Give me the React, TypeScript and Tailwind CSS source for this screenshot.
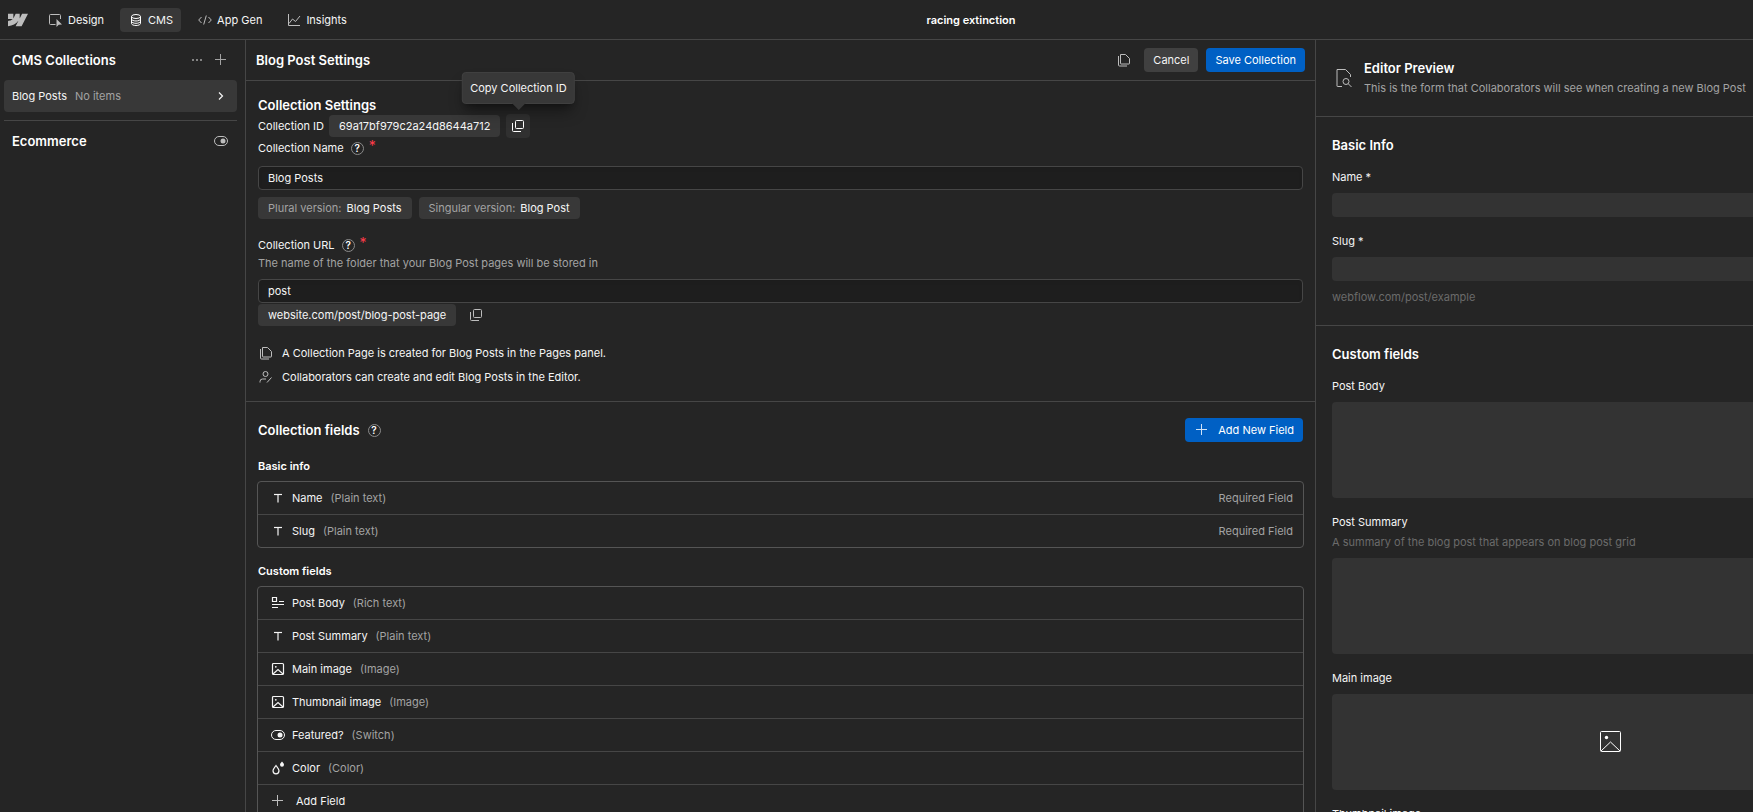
import { useState } from "react";
import type { ReactNode } from "react";

interface IconProps {
  className?: string;
  size?: number;
  children: ReactNode;
}

interface Field {
  icon: ReactNode;
  name: string;
  type: string;
  required?: boolean;
}

// All icons are stroked on a 16px grid
function Icon({ className = "", size = 16, children }: IconProps) {
  return (
    <svg
      width={size}
      height={size}
      viewBox="0 0 16 16"
      fill="none"
      stroke="currentColor"
      className={`shrink-0 ${className}`}
      aria-hidden="true"
    >
      {children}
    </svg>
  );
}

function WebflowLogo() {
  return (
    <svg
      width="20"
      height="20"
      viewBox="0 0 24 24"
      fill="currentColor"
      className="text-[#bdbdbd]"
      aria-hidden="true"
    >
      <path d="m24 4.515-7.658 14.97H9.149l3.205-6.204h-.144C9.566 16.713 5.621 18.973 0 19.485v-6.118s3.596-.213 5.71-2.435H0V4.515h6.417v5.278l.144-.001 2.622-5.277h4.854v5.244h.144l2.72-5.244H24Z" />
    </svg>
  );
}

const DesignIcon = () => (
  <Icon>
    <path d="M7.500 12.500h-5a1 1 0 0 1-1-1v-8a1 1 0 0 1 1-1h9a1 1 0 0 1 1 1V7" />
    <path d="M8.500 7v8l2.200-2.300 3.300-.2z" fill="currentColor" stroke="none" />
  </Icon>
);

const DatabaseIcon = () => (
  <Icon>
    <ellipse cx="8" cy="4.500" rx="4.500" ry="2" />
    <path d="M3.500 4.500v7c0 1.100 2 2 4.500 2s4.500-.9 4.500-2v-7" />
    <path d="M3.500 7c0 1.100 2 2 4.500 2s4.500-.9 4.500-2M3.500 9.300c0 1.100 2 2 4.500 2s4.500-.9 4.500-2" />
  </Icon>
);

const CodeIcon = () => (
  <Icon>
    <path d="M4.500 5 1.700 8l2.800 3M11.500 5l2.800 3-2.800 3M9.300 3.500l-2.600 9" />
  </Icon>
);

const ChartIcon = () => (
  <Icon>
    <path d="M2.500 2v11.500H14M3 11.500 6.500 7l3 2.500L14 4" />
  </Icon>
);

const PlusIcon = ({ className = "" }: { className?: string }) => (
  <Icon className={className}>
    <path d="M7.500 2v11M2 7.500h11" />
  </Icon>
);

const DotsIcon = () => (
  <Icon>
    <path d="M3 8h2M7 8h2M11 8h2" strokeWidth="1.500" />
  </Icon>
);

const ChevronIcon = () => (
  <Icon>
    <path d="m6 4.500 3.500 3.500L6 11.500" strokeWidth="1.200" />
  </Icon>
);

const SwitchIcon = () => (
  <Icon>
    <rect x="1.500" y="3.500" width="13" height="9" rx="4.500" />
    <circle cx="10" cy="8" r="2.500" fill="currentColor" stroke="none" />
  </Icon>
);

const CopyIcon = () => (
  <Icon>
    <rect x="5.500" y="2.500" width="8" height="8" rx="1" />
    <path d="M2.500 5v7.500a1 1 0 0 0 1 1H11" />
  </Icon>
);

const PagesIcon = () => (
  <Icon>
    <path d="M4.500 2.500h5l4 4v5a.5.5 0 0 1-.5.500H5a.5.5 0 0 1-.5-.5z" />
    <path d="M2.500 4v9a1 1 0 0 0 1 1H11" />
  </Icon>
);

const CollaboratorIcon = () => (
  <Icon>
    <circle cx="7.500" cy="5" r="2.500" />
    <path d="M2 13.500v-1a2.500 2.500 0 0 1 2.500-2.500H8M9 13.500l4.500-5" />
  </Icon>
);

const PlainTextIcon = () => (
  <Icon>
    <path d="M4 4.500h8" strokeWidth="1.200" />
    <path d="M8 4.500v8" strokeWidth="1.200" />
  </Icon>
);

const RichTextIcon = () => (
  <Icon>
    <path d="M2.500 2.500h4v4h-4zM9 6.500h5M2 9.500h12M2 12.500h6" strokeWidth="1.200" />
  </Icon>
);

const ImageIcon = () => (
  <Icon>
    <rect x="2.500" y="2.500" width="11" height="11" rx="1" strokeWidth="1.200" />
    <path d="m3 13 5-4.500 5 4.500" strokeWidth="1.200" />
    <circle cx="5.800" cy="5.800" r=".9" fill="currentColor" stroke="none" />
  </Icon>
);

const ColorIcon = () => (
  <Icon>
    <path
      d="M6 5.500C4.500 7.500 3 9 3 10.800a3 3 0 0 0 6 0C9 9 7.500 7.500 6 5.500z"
      strokeWidth="1.200"
    />
    <path
      d="M12 1.500c-.9 1.200-2 2.100-2 3.300a2 2 0 0 0 4 0c0-1.200-1.100-2.100-2-3.300z"
      fill="currentColor"
      stroke="none"
    />
  </Icon>
);

const navItems = [
  { label: "Design", icon: <DesignIcon />, active: false },
  { label: "CMS", icon: <DatabaseIcon />, active: true },
  { label: "App Gen", icon: <CodeIcon />, active: false },
  { label: "Insights", icon: <ChartIcon />, active: false },
];

const basicFields: Field[] = [
  { icon: <PlainTextIcon />, name: "Name", type: "Plain text", required: true },
  { icon: <PlainTextIcon />, name: "Slug", type: "Plain text", required: true },
];

const customFields: Field[] = [
  { icon: <RichTextIcon />, name: "Post Body", type: "Rich text" },
  { icon: <PlainTextIcon />, name: "Post Summary", type: "Plain text" },
  { icon: <ImageIcon />, name: "Main image", type: "Image" },
  { icon: <ImageIcon />, name: "Thumbnail image", type: "Image" },
  { icon: <SwitchIcon />, name: "Featured?", type: "Switch" },
  { icon: <ColorIcon />, name: "Color", type: "Color" },
];

function HelpButton({ label }: { label: string }) {
  return (
    <button
      type="button"
      aria-label={label}
      className="flex h-[13px] w-[13px] items-center justify-center rounded-full border border-[#8a8a8a] text-[10px] leading-none font-semibold text-white"
    >
      ?
    </button>
  );
}

function Chip({ children }: { children: ReactNode }) {
  return (
    <span className="flex h-[22px] items-center gap-[5px] rounded bg-[#383838] px-[10px] text-[#f5f5f5]">
      {children}
    </span>
  );
}

function FieldRow({ field }: { field: Field }) {
  return (
    <li className="flex h-[33px] items-center border-b border-[#464646] pr-[10px] pl-3 last:h-8 last:border-b-0">
      {field.icon}
      <span className="ml-[6px]">{field.name}</span>
      <span className="ml-2 text-[#a3a3a3]">({field.type})</span>
      {field.required && (
        <span className="ml-auto text-[#a3a3a3]">Required Field</span>
      )}
    </li>
  );
}

function PreviewImage({ label }: { label: string }) {
  return (
    <div className="mb-4">
      <p className="mb-2 leading-4">{label}</p>
      <div className="flex h-24 items-center justify-center rounded bg-[#333333]">
        <svg
          width="24"
          height="24"
          viewBox="0 0 24 24"
          fill="none"
          stroke="white"
          aria-hidden="true"
        >
          <rect x="1.500" y="1.500" width="20" height="20" rx="1" />
          <path d="m2 21 9.500-9 9.500 9" />
          <circle cx="7.500" cy="7.500" r="1.700" fill="white" stroke="none" />
        </svg>
      </div>
    </div>
  );
}

export default function App() {
  const [name, setName] = useState("Blog Posts");
  const [slug, setSlug] = useState("post");

  return (
    <div className="flex h-screen flex-col overflow-hidden bg-[#252525] font-['Inter',sans-serif] text-[11px] leading-4 text-[#f5f5f5]">
      {/* Top bar */}
      <header className="flex h-10 shrink-0 items-center border-b border-[#464646] pl-2">
        <a href="#" aria-label="Webflow">
          <WebflowLogo />
        </a>
        <nav className="ml-3 flex gap-2">
          {navItems.map((item) => (
            <a
              key={item.label}
              href="#"
              className={`flex h-6 items-center gap-1 rounded px-2 ${
                item.active ? "bg-[#383838]" : ""
              }`}
            >
              <span className={item.active ? "text-white" : "text-[#bdbdbd]"}>
                {item.icon}
              </span>
              {item.label}
            </a>
          ))}
        </nav>
        <h1 className="flex-1 pr-[166px] text-center font-semibold text-white">
          racing extinction
        </h1>
      </header>

      <div className="flex min-h-0 flex-1">
        {/* Collections sidebar */}
        <aside className="w-[246px] shrink-0 border-r border-[#464646] pr-2 pl-1">
          <div className="flex h-10 items-center pr-2 pl-2 text-[#a3a3a3]">
            <h2 className="flex-1 text-[13px] font-semibold text-white">
              CMS Collections
            </h2>
            <button type="button" aria-label="More options" className="mr-2">
              <DotsIcon />
            </button>
            <button type="button" aria-label="New collection">
              <PlusIcon />
            </button>
          </div>
          <a
            href="#"
            className="flex h-8 items-center rounded bg-[#383838] pr-2 pl-2"
          >
            <span>Blog Posts</span>
            <span className="ml-2 flex-1 text-[#a3a3a3]">No items</span>
            <ChevronIcon />
          </a>
          <div className="mt-2 flex h-10 items-center border-t border-[#464646] px-2">
            <h2 className="flex-1 text-[13px] font-semibold text-white">
              Ecommerce
            </h2>
            <button
              type="button"
              aria-label="Toggle Ecommerce"
              className="text-[#bdbdbd]"
            >
              <SwitchIcon />
            </button>
          </div>
        </aside>

        {/* Collection settings */}
        <main className="min-w-0 flex-1 overflow-hidden">
          <div className="flex h-[41px] items-center border-b border-[#464646] pr-[10px] pl-[10px]">
            <h2 className="flex-1 text-[13px] font-semibold text-white">
              Blog Post Settings
            </h2>
            <button
              type="button"
              aria-label="Duplicate collection"
              className="mr-3 text-[#bdbdbd]"
            >
              <PagesIcon />
            </button>
            <button
              type="button"
              className="mr-2 h-6 rounded bg-[#404040] px-[9px]"
            >
              Cancel
            </button>
            <button
              type="button"
              className="h-6 rounded bg-[#0060c4] px-[9px] text-white"
            >
              Save Collection
            </button>
          </div>

          <section className="border-b border-[#464646] px-3 pt-4 pb-4">
            <h3 className="text-[13px] font-semibold text-white">
              Collection Settings
            </h3>
            <div className="mt-px flex h-6 items-center">
              <span className="mr-[5px]">Collection ID</span>
              <Chip>69a17bf979c2a24d8644a712</Chip>
              <div className="relative ml-[6px]">
                <button
                  type="button"
                  aria-label="Copy Collection ID"
                  className="flex h-6 w-6 items-center justify-center rounded bg-[#303030] text-white"
                >
                  <CopyIcon />
                </button>
                <div
                  role="tooltip"
                  className="absolute bottom-full left-1/2 mb-[10px] flex h-8 -translate-x-1/2 items-center rounded border border-[#404040] bg-[#383838] px-[7px] whitespace-nowrap shadow-lg shadow-black/40"
                >
                  Copy Collection ID
                  <span className="absolute top-full left-1/2 -translate-x-1/2 border-x-[7px] border-t-[7px] border-x-transparent border-t-[#383838]" />
                </div>
              </div>
            </div>
            <div className="mt-[2px] flex h-4 items-center">
              <label htmlFor="collection-name" className="mr-[7px]">
                Collection Name
              </label>
              <HelpButton label="About Collection Name" />
              <span className="ml-[5px] self-start text-[14px] leading-3 text-[#ff3b4a]">
                *
              </span>
            </div>
            <input
              id="collection-name"
              value={name}
              onChange={(e) => setName(e.target.value)}
              className="mt-[10px] block h-6 w-full rounded border border-[#464646] bg-[#1e1e1e] px-[9px] shadow-inner outline-none"
            />
            <div className="mt-[7px] flex gap-[7px]">
              <Chip>
                <span className="text-[#a3a3a3]">Plural version:</span>
                Blog Posts
              </Chip>
              <Chip>
                <span className="text-[#a3a3a3]">Singular version:</span>
                Blog Post
              </Chip>
            </div>

            <div className="mt-[18px] flex h-4 items-center">
              <label htmlFor="collection-url" className="mr-[7px]">
                Collection URL
              </label>
              <HelpButton label="About Collection URL" />
              <span className="ml-[5px] self-start text-[14px] leading-3 text-[#ff3b4a]">
                *
              </span>
            </div>
            <p className="mt-[2px] text-[#a3a3a3]">
              The name of the folder that your Blog Post pages will be stored in
            </p>
            <input
              id="collection-url"
              value={slug}
              onChange={(e) => setSlug(e.target.value)}
              className="mt-2 block h-6 w-full rounded border border-[#464646] bg-[#1e1e1e] px-[9px] shadow-inner outline-none"
            />
            <div className="mt-px flex items-center">
              <Chip>website.com/{slug}/blog-post-page</Chip>
              <button
                type="button"
                aria-label="Copy URL"
                className="ml-3 text-[#bdbdbd]"
              >
                <CopyIcon />
              </button>
            </div>

            <p className="mt-[19px] flex items-center gap-2">
              <span className="text-[#bdbdbd]">
                <PagesIcon />
              </span>
              A Collection Page is created for Blog Posts in the Pages panel.
            </p>
            <p className="mt-2 flex items-center gap-2">
              <span className="text-[#bdbdbd]">
                <CollaboratorIcon />
              </span>
              Collaborators can create and edit Blog Posts in the Editor.
            </p>
          </section>

          <section className="px-[11px] pt-4">
            <div className="flex items-center px-px">
              <h3 className="mr-2 text-[13px] font-semibold text-white">
                Collection fields
              </h3>
              <HelpButton label="About Collection fields" />
              <button
                type="button"
                className="ml-auto flex h-6 items-center gap-2 rounded bg-[#0060c4] px-[9px] text-white"
              >
                <PlusIcon className="text-[#cfe2f7]" />
                Add New Field
              </button>
            </div>

            <h4 className="mt-4 px-px font-semibold text-white">Basic info</h4>
            <ul className="mt-[7px] rounded border border-[#555555]">
              {basicFields.map((field) => (
                <FieldRow key={field.name} field={field} />
              ))}
            </ul>

            <h4 className="mt-[15px] px-px font-semibold text-white">
              Custom fields
            </h4>
            <ul className="mt-[7px] rounded border border-[#555555]">
              {customFields.map((field) => (
                <FieldRow key={field.name} field={field} />
              ))}
              <li>
                <button
                  type="button"
                  className="flex h-8 w-full items-center gap-[10px] pl-3"
                >
                  <PlusIcon className="text-[#bdbdbd]" />
                  Add Field
                </button>
              </li>
            </ul>
          </section>
        </main>

        {/* Editor preview, its form runs past the edge of the panel */}
        <aside className="w-[438px] shrink-0 overflow-hidden border-l border-[#464646]">
          <div className="w-[590px]">
            <div className="flex h-[77px] items-center gap-3 border-b border-[#464646] px-4">
              <svg
                width="20"
                height="20"
                viewBox="0 0 20 20"
                fill="none"
                stroke="currentColor"
                className="text-[#bdbdbd]"
                aria-hidden="true"
              >
                <path d="M10 18.500H5.500a.5.5 0 0 1-.5-.5V1.500h8.500l5 5V9" />
                <circle cx="14" cy="13.500" r="3" />
                <path d="m16.200 15.700 3.300 3.300" />
              </svg>
              <div>
                <h2 className="text-[13px] leading-5 font-semibold text-white">
                  Editor Preview
                </h2>
                <p className="leading-5 text-[#a3a3a3]">
                  This is the form that Collaborators will see when creating a
                  new Blog Post
                </p>
              </div>
            </div>

            <section className="border-b border-[#464646] px-4 pt-5 pb-5">
              <h3 className="mb-4 text-[13px] font-semibold text-white">
                Basic Info
              </h3>
              <label htmlFor="preview-name" className="block">
                Name *
              </label>
              <input
                id="preview-name"
                readOnly
                className="mt-2 mb-4 block h-6 w-full rounded bg-[#333333] px-2 outline-none"
              />
              <label htmlFor="preview-slug" className="block">
                Slug *
              </label>
              <input
                id="preview-slug"
                readOnly
                className="mt-2 block h-6 w-full rounded bg-[#333333] px-2 outline-none"
              />
              <p className="mt-2 text-[#6b6b6b]">webflow.com/post/example</p>
            </section>

            <section className="px-4 pt-5">
              <h3 className="mb-4 text-[13px] font-semibold text-white">
                Custom fields
              </h3>
              <label htmlFor="preview-body" className="block">
                Post Body
              </label>
              <textarea
                id="preview-body"
                readOnly
                className="mt-2 mb-4 block h-24 w-full resize-none rounded bg-[#333333] p-2 outline-none"
              />
              <label htmlFor="preview-summary" className="block">
                Post Summary
              </label>
              <p className="mt-1 text-[#6b6b6b]">
                A summary of the blog post that appears on blog post grid
              </p>
              <textarea
                id="preview-summary"
                readOnly
                className="mt-2 mb-4 block h-24 w-full resize-none rounded bg-[#333333] p-2 outline-none"
              />
              <PreviewImage label="Main image" />
              <PreviewImage label="Thumbnail image" />
            </section>
          </div>
        </aside>
      </div>
    </div>
  );
}
